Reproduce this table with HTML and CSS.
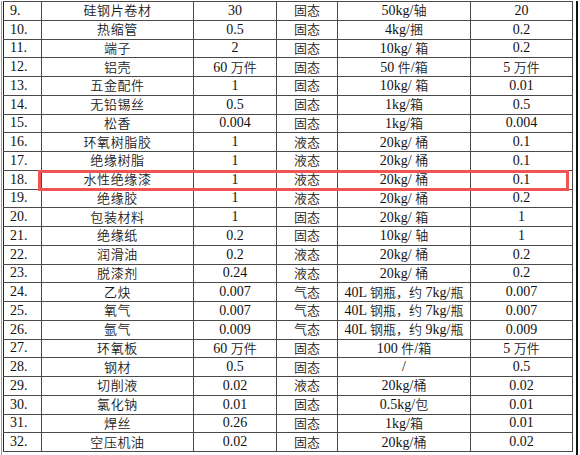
FILE: index.html
```html
<!DOCTYPE html>
<html lang="zh">
<head>
<meta charset="utf-8">
<link rel="stylesheet" href="styles.css">
</head>
<body>
<div class="page">
<table class="t">
<colgroup><col class="c1"><col class="c2"><col class="c3"><col class="c4"><col class="c5"><col class="c6"></colgroup>
<tbody>
<tr><td>9.</td><td class="n"><span class="z">硅钢片卷材</span></td><td>30</td><td><span class="z">固态</span></td><td>50kg/<span class="z">轴</span></td><td>20</td></tr>
<tr><td>10.</td><td class="n"><span class="z">热缩管</span></td><td>0.5</td><td><span class="z">固态</span></td><td>4kg/<span class="z">捆</span></td><td>0.2</td></tr>
<tr><td>11.</td><td class="n"><span class="z">端子</span></td><td>2</td><td><span class="z">固态</span></td><td>10kg/ <span class="z">箱</span></td><td>0.2</td></tr>
<tr><td>12.</td><td class="n"><span class="z">铝壳</span></td><td>60 <span class="z">万件</span></td><td><span class="z">固态</span></td><td>50 <span class="z">件</span>/<span class="z">箱</span></td><td>5 <span class="z">万件</span></td></tr>
<tr><td>13.</td><td class="n"><span class="z">五金配件</span></td><td>1</td><td><span class="z">固态</span></td><td>10kg/ <span class="z">箱</span></td><td>0.01</td></tr>
<tr><td>14.</td><td class="n"><span class="z">无铅锡丝</span></td><td>0.5</td><td><span class="z">固态</span></td><td>1kg/<span class="z">箱</span></td><td>0.5</td></tr>
<tr><td>15.</td><td class="n"><span class="z">松香</span></td><td>0.004</td><td><span class="z">固态</span></td><td>1kg/<span class="z">箱</span></td><td>0.004</td></tr>
<tr><td>16.</td><td class="n"><span class="z">环氧树脂胶</span></td><td>1</td><td><span class="z">液态</span></td><td>20kg/ <span class="z">桶</span></td><td>0.1</td></tr>
<tr><td>17.</td><td class="n"><span class="z">绝缘树脂</span></td><td>1</td><td><span class="z">液态</span></td><td>20kg/ <span class="z">桶</span></td><td>0.1</td></tr>
<tr><td>18.</td><td class="n"><span class="z">水性绝缘漆</span></td><td>1</td><td><span class="z">液态</span></td><td>20kg/ <span class="z">桶</span></td><td>0.1</td></tr>
<tr><td>19.</td><td class="n"><span class="z">绝缘胶</span></td><td>1</td><td><span class="z">液态</span></td><td>20kg/ <span class="z">桶</span></td><td>0.2</td></tr>
<tr><td>20.</td><td class="n"><span class="z">包装材料</span></td><td>1</td><td><span class="z">固态</span></td><td>20kg/ <span class="z">箱</span></td><td>1</td></tr>
<tr><td>21.</td><td class="n"><span class="z">绝缘纸</span></td><td>0.2</td><td><span class="z">固态</span></td><td>10kg/ <span class="z">轴</span></td><td>1</td></tr>
<tr><td>22.</td><td class="n"><span class="z">润滑油</span></td><td>0.2</td><td><span class="z">液态</span></td><td>20kg/ <span class="z">桶</span></td><td>0.2</td></tr>
<tr><td>23.</td><td class="n"><span class="z">脱漆剂</span></td><td>0.24</td><td><span class="z">液态</span></td><td>20kg/ <span class="z">桶</span></td><td>0.2</td></tr>
<tr><td>24.</td><td class="n"><span class="z">乙炔</span></td><td>0.007</td><td><span class="z">气态</span></td><td>40L <span class="z">钢瓶，约</span> 7kg/<span class="z">瓶</span></td><td>0.007</td></tr>
<tr><td>25.</td><td class="n"><span class="z">氧气</span></td><td>0.007</td><td><span class="z">气态</span></td><td>40L <span class="z">钢瓶，约</span> 7kg/<span class="z">瓶</span></td><td>0.007</td></tr>
<tr><td>26.</td><td class="n"><span class="z">氩气</span></td><td>0.009</td><td><span class="z">气态</span></td><td>40L <span class="z">钢瓶，约</span> 9kg/<span class="z">瓶</span></td><td>0.009</td></tr>
<tr><td>27.</td><td class="n"><span class="z">环氧板</span></td><td>60 <span class="z">万件</span></td><td><span class="z">固态</span></td><td>100 <span class="z">件</span>/<span class="z">箱</span></td><td>5 <span class="z">万件</span></td></tr>
<tr><td>28.</td><td class="n"><span class="z">钢材</span></td><td>0.5</td><td><span class="z">固态</span></td><td>/</td><td>0.5</td></tr>
<tr><td>29.</td><td class="n"><span class="z">切削液</span></td><td>0.02</td><td><span class="z">液态</span></td><td>20kg/<span class="z">桶</span></td><td>0.02</td></tr>
<tr><td>30.</td><td class="n"><span class="z">氯化钠</span></td><td>0.01</td><td><span class="z">固态</span></td><td>0.5kg/<span class="z">包</span></td><td>0.01</td></tr>
<tr><td>31.</td><td class="n"><span class="z">焊丝</span></td><td>0.26</td><td><span class="z">固态</span></td><td>1kg/<span class="z">箱</span></td><td>0.01</td></tr>
<tr><td>32.</td><td class="n"><span class="z">空压机油</span></td><td>0.02</td><td><span class="z">固态</span></td><td>20kg/<span class="z">桶</span></td><td>0.02</td></tr>
</tbody>
</table>
<div class="mark"></div>
</div>
</body>
</html>
```
FILE: styles.css
```css
html, body {
  margin: 0;
  padding: 0;
  background: #fff;
}
.page {
  position: relative;
  margin-left: 1px;
  height: 455px;
  padding-left: 1px;
  box-sizing: border-box;
  width: 577px;
  border-left: 1px solid #9a9a9a;
  border-right: 2px solid #111;
}
.t {
  border-collapse: collapse;
  table-layout: fixed;
  width: 569px;
  margin-top: 1px;
  font-family: "Liberation Serif", "Times New Roman", serif;
  font-size: 14px;
  color: #111;
}
.c1 { width: 38px; }
.c2 { width: 152px; }
.c3 { width: 83px; }
.c4 { width: 61px; }
.c5 { width: 133px; }
.c6 { width: 102px; }
.t tr {
  height: 18.75px;
}
.t td {
  border: 1px solid #4a4a4a;
  padding: 0;
  line-height: 14px;
  text-align: center;
  vertical-align: middle;
  white-space: nowrap;
  overflow: hidden;
}
.t td:first-child {
  text-align: left;
  padding-left: 6px;
  border-left-color: #222;
}
.z {
  font-family: "Noto Sans CJK SC", sans-serif;
  font-size: 13px;
  letter-spacing: 0;
  font-weight: 350;
  color: #1a1a1a;
}
.n .z {
  letter-spacing: 0.6px;
}
.mark {
  position: absolute;
  left: 36px;
  top: 169px;
  width: 531px;
  height: 21px;
  border: 3px solid #f25454;
  box-sizing: border-box;
}
```
